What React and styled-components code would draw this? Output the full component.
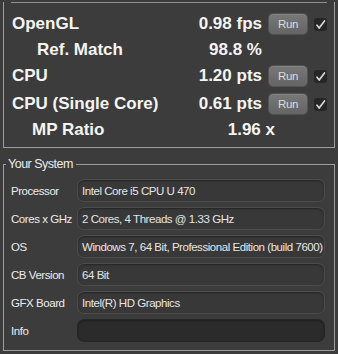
import React from 'react';
import styled, { createGlobalStyle } from 'styled-components';

const GlobalStyle = createGlobalStyle`
  html, body {
    margin: 0;
    padding: 0;
    background-color: #3c3c3c;
  }
  body {
    font-family: "Liberation Sans", Arial, sans-serif;
    color: #f2f2f2;
  }
`;

const Page = styled.div`
  width: 338px;
  height: 354px;
  overflow: hidden;
  background-color: #3c3c3c;
`;

const ScorePanel = styled.div`
  margin: 0 3px;
  border: 1px solid #9e9e9e;
  border-top: none;
  padding-bottom: 5px;
`;

const Separator = styled.div`
  margin: 2px 7px 7px;
  height: 1px;
  background-color: #8f8f8f;
`;

const ScoreRow = styled.div`
  display: grid;
  grid-template-columns: 1fr auto 40px 13px;
  column-gap: 6px;
  align-items: center;
  height: ${(p) => (p.$tall ? 28 : 24)}px;
  padding-right: 7px;
`;

const ScoreLabel = styled.div`
  padding-left: ${(p) => p.$indent}px;
  font-size: 17px;
  font-weight: bold;
  white-space: nowrap;
  color: #f4f4f4;
`;

const ScoreValue = styled.div`
  font-size: 17px;
  font-weight: bold;
  text-align: right;
  white-space: nowrap;
  color: #f4f4f4;
  margin-right: ${(p) => p.$shift || 0}px;
`;

const RunButton = styled.button`
  width: 40px;
  height: 22px;
  padding: 0;
  border: 1px solid #535353;
  border-radius: 5px;
  background: linear-gradient(#787878, #646464);
  color: #dcdcdc;
  font-family: "Liberation Sans", Arial, sans-serif;
  font-size: 11.5px;
  letter-spacing: -0.3px;
  box-shadow: inset 0 1px 0 rgba(255, 255, 255, 0.08);
`;

const CheckBox = styled.div`
  width: 13px;
  height: 13px;
  border-radius: 3px;
  background-color: #262626;
  display: flex;
  align-items: center;
  justify-content: center;
`;

const SystemSet = styled.fieldset`
  margin: 9px 3px 0;
  padding: 0 9px 8px 7px;
  border: 1px solid #9e9e9e;
  min-width: 0;
`;

const Legend = styled.legend`
  margin-left: -5px;
  padding: 0 3px 0 2px;
  font-size: 12.5px;
  letter-spacing: -0.5px;
  line-height: 14px;
  color: #ececec;
`;

const InfoGrid = styled.div`
  display: grid;
  grid-template-columns: 66px 1fr;
  row-gap: 5px;
  padding-top: 8px;
  align-items: center;
`;

const InfoLabel = styled.div`
  font-size: 11.5px;
  letter-spacing: -0.45px;
  color: #ececec;
  white-space: nowrap;
`;

const InfoField = styled.div`
  height: 23px;
  box-sizing: border-box;
  border-radius: 7px;
  border: 1px solid ${(p) => (p.$empty ? '#262626' : '#4c4c4c')};
  background-color: ${(p) => (p.$empty ? '#2b2b2b' : '#383838')};
  box-shadow: inset 0 1px 2px rgba(0, 0, 0, 0.35);
  padding: 0 4px;
  display: flex;
  align-items: center;
  overflow: hidden;
  white-space: nowrap;
  font-size: 11.5px;
  letter-spacing: -0.45px;
  color: #e6e6e6;
`;

const Check = () => (
  <CheckBox>
    <svg width="11" height="11" viewBox="0 0 11 11">
      <path d="M2 6.2 L4.2 9 L9.5 2" fill="none" stroke="#d8d8d8" strokeWidth="1.7" strokeLinecap="round" strokeLinejoin="round" />
    </svg>
  </CheckBox>
);

const scores = [
  { label: 'OpenGL', value: '0.98 fps', indent: 8, run: true },
  { label: 'Ref. Match', value: '98.8 %', indent: 33 },
  { label: 'CPU', value: '1.20 pts', indent: 8, run: true },
  { label: 'CPU (Single Core)', value: '0.61 pts', indent: 8, run: true },
  { label: 'MP Ratio', value: '1.96 x', indent: 28, shift: -13 },
];

const system = [
  ['Processor', 'Intel Core i5 CPU U 470'],
  ['Cores x GHz', '2 Cores, 4 Threads @ 1.33 GHz'],
  ['OS', 'Windows 7, 64 Bit, Professional Edition (build 7600)'],
  ['CB Version', '64 Bit'],
  ['GFX Board', 'Intel(R) HD Graphics'],
  ['Info', ''],
];

export default function App() {
  return (
    <Page>
      <GlobalStyle />
      <ScorePanel>
        <Separator />
        {scores.map((s) => (
          <ScoreRow key={s.label} $tall={s.run}>
            <ScoreLabel $indent={s.indent}>{s.label}</ScoreLabel>
            <ScoreValue $shift={s.shift}>{s.value}</ScoreValue>
            {s.run ? <RunButton>Run</RunButton> : <span />}
            {s.run ? <Check /> : <span />}
          </ScoreRow>
        ))}
      </ScorePanel>
      <SystemSet>
        <Legend>Your System</Legend>
        <InfoGrid>
          {system.map(([label, value]) => (
            <React.Fragment key={label}>
              <InfoLabel>{label}</InfoLabel>
              <InfoField $empty={!value}>{value}</InfoField>
            </React.Fragment>
          ))}
        </InfoGrid>
      </SystemSet>
    </Page>
  );
}
